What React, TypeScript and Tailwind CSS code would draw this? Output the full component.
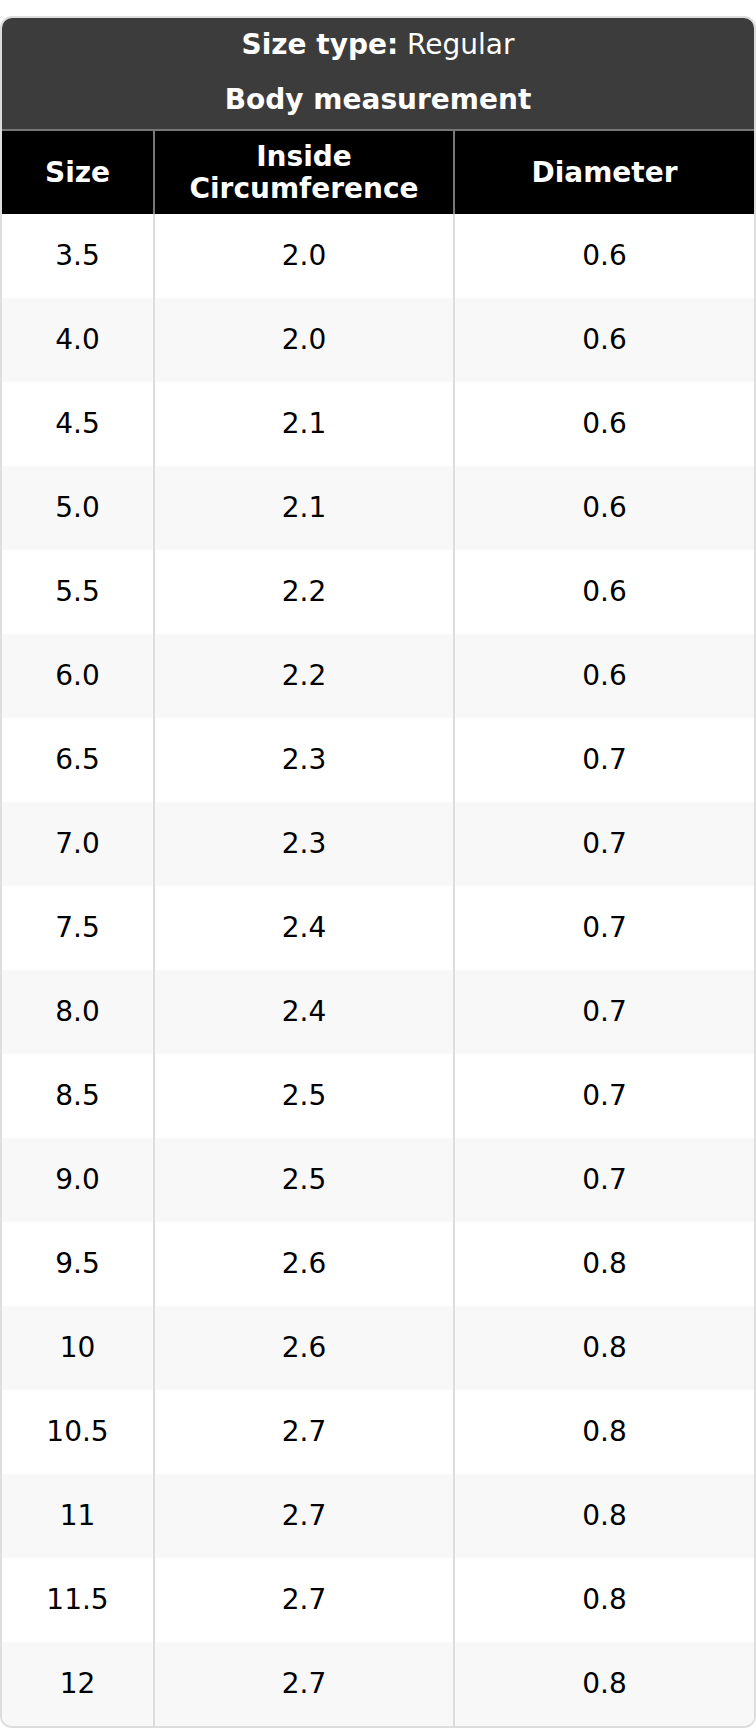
const rows: [string, string, string][] = [
  ["3.5", "2.0", "0.6"],
  ["4.0", "2.0", "0.6"],
  ["4.5", "2.1", "0.6"],
  ["5.0", "2.1", "0.6"],
  ["5.5", "2.2", "0.6"],
  ["6.0", "2.2", "0.6"],
  ["6.5", "2.3", "0.7"],
  ["7.0", "2.3", "0.7"],
  ["7.5", "2.4", "0.7"],
  ["8.0", "2.4", "0.7"],
  ["8.5", "2.5", "0.7"],
  ["9.0", "2.5", "0.7"],
  ["9.5", "2.6", "0.8"],
  ["10", "2.6", "0.8"],
  ["10.5", "2.7", "0.8"],
  ["11", "2.7", "0.8"],
  ["11.5", "2.7", "0.8"],
  ["12", "2.7", "0.8"],
];

export default function App() {
  return (
    <div className="bg-white pt-[16px] font-['DejaVu_Sans',sans-serif]">
      <div className="w-[756px] rounded-[12px] border-2 border-[#dddddd] overflow-hidden">
        {/* caption */}
        <div className="bg-[#3c3c3c] text-white text-[28px] text-center">
          <div className="h-[53px] flex items-center justify-center">
            <span>
              <b>Size type:</b> Regular
            </span>
          </div>
          <div className="h-[58px] flex items-center justify-center font-bold">Body measurement</div>
        </div>
        <div className="h-[2px] bg-[#777777]" />

        {/* column header */}
        <div className="flex bg-black text-white font-bold text-[28px] leading-[32px] text-center h-[83px]">
          <div className="w-[153px] flex items-center justify-center border-r-2 border-[#777777]">Size</div>
          <div className="w-[300px] flex items-center justify-center border-r-2 border-[#777777]">
            Inside
            <br />
            Circumference
          </div>
          <div className="flex-1 flex items-center justify-center">Diameter</div>
        </div>

        {/* body */}
        {rows.map(([size, circ, dia], i) => (
          <div
            key={size}
            className={
              "flex text-[28px] text-black text-center h-[84px] " +
              (i % 2 === 1 ? "bg-[#f8f8f8]" : "bg-white")
            }
          >
            <div className="w-[153px] flex items-center justify-center border-r-2 border-[#dddddd]">{size}</div>
            <div className="w-[300px] flex items-center justify-center border-r-2 border-[#dddddd]">{circ}</div>
            <div className="flex-1 flex items-center justify-center">{dia}</div>
          </div>
        ))}
      </div>
    </div>
  );
}
